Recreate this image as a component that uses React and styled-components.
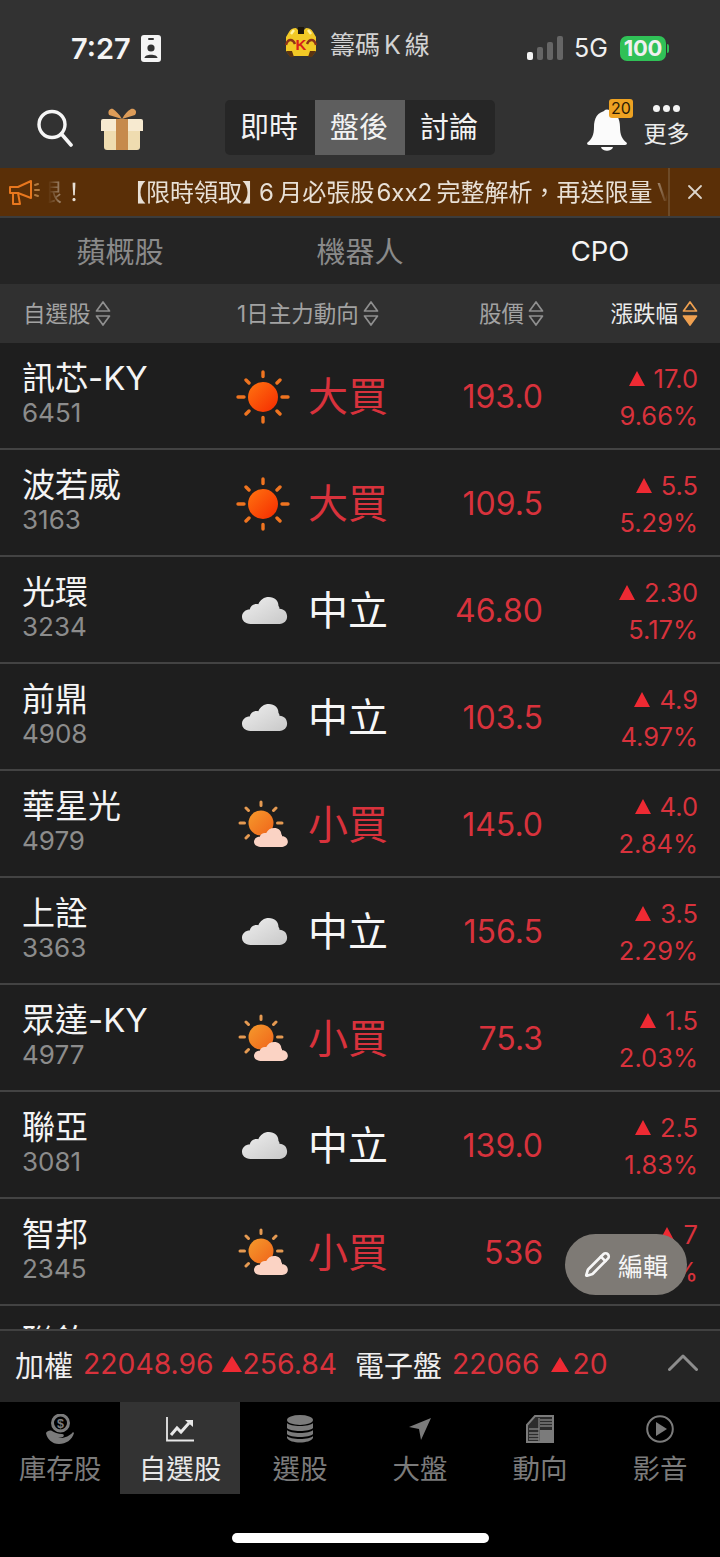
import React from "react";
import styled, { createGlobalStyle } from "styled-components";
import { Pencil, X } from "lucide-react";

const FONT = `Inter, "Noto Sans CJK TC", sans-serif`;
const RED = "#d8323c";
const TRI = "#ee2a33";

const GlobalStyle = createGlobalStyle`
  html, body { margin: 0; padding: 0; background: #000; }
  * { box-sizing: border-box; }
`;

const Page = styled.div`
  width: 720px;
  height: 1557px;
  display: flex;
  flex-direction: column;
  overflow: hidden;
  background: #000;
  font-family: ${FONT};
  color: #fff;
`;

const TopArea = styled.div`
  background: #323232;
`;

const StatusBar = styled.div`
  height: 88px;
  display: flex;
  align-items: center;
  padding: 8px 0 0 71px;
`;

const TimeBox = styled.div`
  width: 214px;
  display: flex;
  align-items: center;
  gap: 10px;
  font-size: 29px;
  font-weight: 600;
  color: #f4f4f4;
`;

const AppTitle = styled.div`
  width: 242px;
  display: flex;
  align-items: center;
  gap: 13px;
  font-size: 25px;
  color: #d2d2d2;
  margin-top: -10px;
`;

const TitleLetter = styled.span`
  margin: 0 4px;
`;

const StatusRight = styled.div`
  display: flex;
  align-items: center;
  font-size: 25px;
  color: #f0f0f0;
`;

const Network = styled.span`
  margin: 0 12px 0 11px;
`;

const Battery = styled.div`
  width: 46px;
  height: 25px;
  border-radius: 7px;
  background: #30c157;
  display: flex;
  align-items: center;
  justify-content: center;
  font-size: 22px;
  font-weight: 700;
  letter-spacing: -0.3px;
`;

const BatteryCap = styled.div`
  width: 2px;
  height: 9px;
  margin-left: 1px;
  border-radius: 0 2px 2px 0;
  background: #30c157;
`;

const Toolbar = styled.div`
  height: 80px;
  display: flex;
  align-items: flex-start;
  padding: 12px 30px 0 37px;
`;

const ToolLeft = styled.div`
  width: 188px;
  height: 55px;
  display: flex;
  align-items: center;
  gap: 28px;
`;

const Segments = styled.div`
  width: 270px;
  height: 55px;
  display: flex;
  border-radius: 5px;
  overflow: hidden;
  background: #262626;
`;

const Segment = styled.div`
  width: 90px;
  display: flex;
  align-items: center;
  justify-content: center;
  padding: 0 2px 5px 0;
  font-size: 29px;
  color: #f2f2f2;
  background: ${(p) => (p.$active ? "#5e5e5e" : "transparent")};
`;

const ToolRight = styled.div`
  flex: 1;
  height: 55px;
  display: flex;
  justify-content: flex-end;
  align-items: center;
  gap: 16px;
`;

const BellBox = styled.div`
  position: relative;
  width: 40px;
  height: 42px;
  margin-top: 4px;
`;

const BellBadge = styled.div`
  position: absolute;
  top: -10px;
  left: 22px;
  width: 24px;
  height: 19px;
  border-radius: 3px;
  background: #eea222;
  color: #2c1c05;
  font-size: 16px;
  line-height: 19px;
  text-align: center;
`;

const MoreBox = styled.div`
  width: 47px;
  margin-top: -5px;
  display: flex;
  flex-direction: column;
  align-items: center;
  font-size: 23px;
  line-height: 28px;
  color: #ececec;
`;

const Dots = styled.div`
  display: flex;
  gap: 3px;
  height: 12px;
  margin-bottom: 5px;
  align-items: center;
`;

const Dot = styled.i`
  width: 7px;
  height: 7px;
  border-radius: 50%;
  background: #f4f4f4;
`;

const Banner = styled.div`
  height: 48px;
  display: flex;
  align-items: center;
  background: #5a2f07;
`;

const BannerIcon = styled.div`
  width: 48px;
  padding-left: 9px;
  display: flex;
  align-items: center;
`;

const Ticker = styled.div`
  width: 620px;
  height: 48px;
  padding-bottom: 3px;
  display: flex;
  align-items: center;
  overflow: hidden;
  white-space: nowrap;
  font-size: 24px;
  color: #e8e0d6;
  -webkit-mask-image: linear-gradient(90deg, transparent 0, #000 26px, #000 600px, transparent 620px);
  mask-image: linear-gradient(90deg, transparent 0, #000 26px, #000 600px, transparent 620px);
`;

const TickerTail = styled.span`
  margin-left: -10px;
  width: 84px;
  flex: none;
`;

const TickerHead = styled.span`
  margin-right: -7px;
  flex: none;
`;

const BannerClose = styled.div`
  flex: 1;
  height: 48px;
  display: flex;
  align-items: center;
  justify-content: center;
  border-left: 2px solid #6d4a27;
  color: #ddd6cc;
`;

const Rule = styled.div`
  height: 2px;
  background: #3c3c3c;
`;

const Tabs = styled.div`
  height: 66px;
  display: grid;
  grid-template-columns: 240px 240px 240px;
  align-items: center;
  background: #242424;
`;

const Tab = styled.div`
  text-align: center;
  padding-bottom: ${(p) => (p.$active ? "0" : "3px")};
  font-size: ${(p) => (p.$active ? "27.5px" : "29px")};
  color: ${(p) => (p.$active ? "#f5f5f5" : "#8a8a8a")};
`;

const columns = `
  display: grid;
  grid-template-columns: 214px 150px 155px 1fr;
  padding: 0 24px 0 23px;
`;

const TableHead = styled.div`
  ${columns}
  height: 59px;
  align-items: center;
  background: #303030;
  font-size: 22.5px;
`;

const HeadCell = styled.div`
  display: flex;
  align-items: center;
  justify-content: ${(p) => (p.$right ? "flex-end" : "flex-start")};
  gap: 4px;
  color: ${(p) => (p.$active ? "#ececec" : "#a2a2a2")};
  margin-right: ${(p) => (p.$right ? "-2px" : "0")};
  white-space: nowrap;
`;

const HeadLabel = styled.span`
  margin: 0 0 3px 0;
`;

const ListWrap = styled.div`
  position: relative;
  flex: 1;
  min-height: 0;
  overflow: hidden;
  background: #1e1e1e;
`;

const Row = styled.div`
  ${columns}
  height: 107px;
  padding-top: 2px;
  align-items: center;
  border-bottom: 2px solid #434343;
`;

const NameCell = styled.div`
  display: flex;
  flex-direction: column;
  margin: -2px 0 0 -1px;
`;

const StockName = styled.div`
  font-size: 33px;
  line-height: 35px;
  color: #f4f4f4;
  white-space: nowrap;
`;

const StockCode = styled.div`
  font-size: 26px;
  line-height: 34px;
  color: #8c8c8c;
`;

const ActionCell = styled.div`
  display: flex;
  align-items: center;
  justify-content: space-between;
  margin: 0 -1px 0 -2px;
`;

const ActionText = styled.div`
  font-size: 40px;
  line-height: 44px;
  color: ${(p) => (p.$neutral ? "#f6f6f6" : RED)};
`;

const Price = styled.div`
  text-align: right;
  font-size: 32px;
  margin-right: -1px;
  color: ${RED};
`;

const ChangeCell = styled.div`
  display: flex;
  flex-direction: column;
  align-items: flex-end;
  margin-right: -2px;
  font-size: 25.5px;
  line-height: 37px;
  color: ${RED};
`;

const ChangeTop = styled.div`
  display: flex;
  align-items: center;
  gap: 9px;
`;

const UpMark = styled.i`
  width: 0;
  height: 0;
  margin-right: ${(p) => p.$gap || 0}px;
  border-left: ${(p) => p.$w || 8.5}px solid transparent;
  border-right: ${(p) => p.$w || 8.5}px solid transparent;
  border-bottom: ${(p) => (p.$w ? p.$w * 1.6 : 15)}px solid ${TRI};
`;

const EditButton = styled.div`
  position: absolute;
  left: 565px;
  top: 891px;
  width: 122px;
  height: 61px;
  border-radius: 31px;
  background: #7e7a75;
  display: flex;
  align-items: center;
  justify-content: center;
  gap: 7px;
  font-size: 25px;
  color: #f6f6f6;
`;

const IndexBar = styled.div`
  height: 73px;
  display: flex;
  align-items: center;
  padding: 0 22px 5px 15px;
  background: #252525;
  border-top: 2px solid #414141;
  white-space: nowrap;
`;

const IndexName = styled.span`
  font-size: 29px;
  color: #efefef;
  margin-right: 10px;
`;

const IndexValue = styled.span`
  font-size: 28.3px;
  color: ${RED};
  margin-right: ${(p) => p.$gap || 0}px;
`;

const IndexToggle = styled.div`
  margin-left: auto;
  margin-bottom: 3px;
  display: flex;
`;

const BottomNav = styled.div`
  height: 92px;
  display: grid;
  grid-template-columns: repeat(6, 120px);
  background: #000;
`;

const NavItem = styled.div`
  display: flex;
  flex-direction: column;
  align-items: center;
  padding-top: 11px;
  font-size: 27.5px;
  line-height: 38px;
  background: ${(p) => (p.$active ? "#333" : "transparent")};
  color: ${(p) => (p.$active ? "#e8e8e8" : "#7b7b7b")};
`;

const NavIcon = styled.div`
  height: 31px;
  margin-bottom: 6px;
  display: flex;
  align-items: center;
`;

const HomeArea = styled.div`
  height: 63px;
  display: flex;
  justify-content: center;
  padding-top: 39px;
  background: #000;
`;

const HomeBar = styled.div`
  width: 257px;
  height: 10px;
  border-radius: 5px;
  background: #fff;
`;

const SortIcon = ({ active }) => {
  const c = active ? "#efa050" : "#8f8f8f";
  return (
    <svg width="16" height="27" viewBox="0 0 16 27">
      <path d="M8 2 L14.5 11 H1.5 Z" fill="none" stroke={c} strokeWidth="1.7" strokeLinejoin="round" />
      <path d="M1.5 16 H14.5 L8 25 Z" fill={active ? c : "none"} stroke={c} strokeWidth="1.7" strokeLinejoin="round" />
    </svg>
  );
};

const SunIcon = () => (
  <svg width="56" height="56" viewBox="0 0 56 56">
    <defs>
      <linearGradient id="sunHot" x1="0" y1="0" x2="1" y2="1">
        <stop offset="0" stopColor="#ff7410" />
        <stop offset="1" stopColor="#f52a00" />
      </linearGradient>
    </defs>
    <circle cx="28" cy="28" r="15" fill="url(#sunHot)" />
    <g stroke="#ef7420" strokeWidth="3.4" strokeLinecap="round">
      <path d="M28 3 V7.5 M28 48.5 V53 M3 28 H9 M47 28 H53 M11 11 L14 14 M42 42 L45 45 M45 11 L42 14 M14 42 L11 45" />
    </g>
  </svg>
);

const cloudPath = "M9 30 C3 30 0 26 0 22 C0 17 4 14 8 14 C9 9 13 7 17 8 C19 3 23 0 28 0 C34 0 38 4 38 10 C39 11 39 12 39 13 C44 13 47 17 47 22 C47 26 44 30 39 30 Z";

const CloudIcon = () => (
  <svg width="56" height="56" viewBox="0 0 56 56">
    <defs>
      <linearGradient id="cloudGrey" x1="0" y1="0" x2="1" y2="1">
        <stop offset="0" stopColor="#efefef" />
        <stop offset="1" stopColor="#c8c8c8" />
      </linearGradient>
    </defs>
    <path d={cloudPath} transform="translate(7 14) scale(0.96 0.9)" fill="url(#cloudGrey)" />
  </svg>
);

const PartlyIcon = () => (
  <svg width="56" height="56" viewBox="0 0 56 56">
    <defs>
      <linearGradient id="sunSoft" x1="0" y1="0" x2="1" y2="1">
        <stop offset="0" stopColor="#f59a2c" />
        <stop offset="1" stopColor="#f0641a" />
      </linearGradient>
    </defs>
    <circle cx="26" cy="26" r="12.5" fill="url(#sunSoft)" />
    <g stroke="#e59a52" strokeWidth="3" strokeLinecap="round">
      <path d="M26 5 V8.5 M5 26 H9.5 M42.5 26 H47 M11 11 L13.5 13.5 M41 11 L38.5 13.5 M11 41 L13.5 38.5" />
    </g>
    <path d={cloudPath} transform="translate(19 31) scale(0.72 0.63)" fill="#fbd3c4" />
  </svg>
);

const LogoIcon = () => (
  <svg width="32" height="32" viewBox="0 0 32 32">
    <path d="M4 5 Q6 1 11 1 L13 3 H19 L21 1 Q26 1 28 5 L31 10 V24 L27 29 H5 L1 24 V10 Z" fill="#f2c926" />
    <rect x="13" y="0" width="6" height="7" fill="#1d170c" />
    <path d="M6 7 L9 3 M26 7 L23 3" stroke="#fff2a0" strokeWidth="2.5" />
    <path d="M1 18 C3 11 8 12 10 17 M31 18 C29 11 24 12 22 17" fill="none" stroke="#8c3318" strokeWidth="2.4" />
    <path d="M1 24 H7 L9 30 H5 Z M31 24 H25 L23 30 H27 Z" fill="#5c3410" />
    <text x="16" y="23" textAnchor="middle" fontSize="15" fontWeight="700" fill="#d8201c" fontFamily="Liberation Sans">K</text>
  </svg>
);

const IdCard = () => (
  <svg width="20" height="27" viewBox="0 0 20 27">
    <rect x="0" y="0" width="20" height="27" rx="3" fill="#f4f4f4" />
    <rect x="7" y="3" width="6" height="2" rx="1" fill="#323232" />
    <circle cx="10" cy="13" r="3.6" fill="#323232" />
    <path d="M3.5 23 C3.5 18.5 16.5 18.5 16.5 23 Z" fill="#323232" />
  </svg>
);

const Signal = () => (
  <svg width="36" height="24" viewBox="0 0 36 24">
    <rect x="0" y="16" width="6" height="8" rx="2" fill="#f4f4f4" />
    <rect x="10" y="11" width="6" height="13" rx="2" fill="#666" />
    <rect x="20" y="6" width="6" height="18" rx="2" fill="#666" />
    <rect x="30" y="0" width="6" height="24" rx="2" fill="#666" />
  </svg>
);

const SearchIcon = () => (
  <svg width="36" height="38" viewBox="0 0 36 38">
    <circle cx="15" cy="15.5" r="13" fill="none" stroke="#f6f6f6" strokeWidth="3.4" />
    <path d="M24.5 25 L34 36" stroke="#f6f6f6" strokeWidth="3.6" strokeLinecap="round" />
  </svg>
);

const GiftIcon = () => (
  <svg width="42" height="44" viewBox="0 0 42 44">
    <path d="M21 13 L8 9 C6 4 10 2 12 3 C15 5 18 8 21 13 Z M21 13 L34 9 C37 5 33 2 30 3 C26 5 24 8 21 13 Z" fill="#dd9c58" />
    <path d="M0 15 Q0 13 2 13 H40 Q42 13 42 15 V25 H0 Z" fill="#f7ead0" />
    <path d="M3 25 H39 V41 Q39 44 36 44 H6 Q3 44 3 41 Z" fill="#efdcb0" />
    <rect x="15" y="13" width="12" height="31" fill="#c68a4c" />
  </svg>
);

const BellIcon = () => (
  <svg width="40" height="42" viewBox="0 0 40 42">
    <circle cx="20" cy="4" r="3.5" fill="#fbfbfb" />
    <path d="M20 2 C10 2 7 10 7 18 C7 26 5 30 0 34 Q0 36 2 36 H38 Q40 36 40 34 C35 30 33 26 33 18 C33 10 30 2 20 2 Z" fill="#fbfbfb" />
    <path d="M14 38 H26 C25 43 15 43 14 38 Z" fill="#fbfbfb" />
  </svg>
);

const MegaphoneIcon = () => (
  <svg width="31" height="27" viewBox="0 0 31 27" fill="none" stroke="#e8771e" strokeWidth="2" strokeLinejoin="round" strokeLinecap="round">
    <path d="M1 8 H9 L22 2 V19 L9 14 H1 Z" />
    <path d="M4 14 V25 H11 L9 14" />
    <path d="M26 6 L29 5 M26 11 H30 M26 16 L29 17" stroke="#b07a40" />
  </svg>
);

const ChevronIcon = () => (
  <svg width="30" height="17" viewBox="0 0 30 17">
    <path d="M1.5 15.5 L15 2 L28.5 15.5" fill="none" stroke="#8d8d8d" strokeWidth="3" strokeLinecap="round" strokeLinejoin="round" />
  </svg>
);

const NavMoney = () => (
  <svg width="28" height="30" viewBox="0 0 28 30">
    <circle cx="14.5" cy="9" r="8" fill="none" stroke="#7b7b7b" strokeWidth="3" />
    <text x="14.5" y="13.5" textAnchor="middle" fontSize="12.5" fontWeight="700" fill="#7b7b7b" fontFamily="Liberation Sans">$</text>
    <path d="M0 19 C1 17 4 16 6 17 C8 18.5 12 20 16 20 C19 20 18 23.5 15 23.5 H12 C16 25 23 23 27 18 L28 19 C26 26 20 30 13 30 C6 30 1 25 0 19 Z" fill="#7b7b7b" />
  </svg>
);

const NavChart = () => (
  <svg width="28" height="26" viewBox="0 0 28 26" fill="none" stroke="#e8e8e8">
    <path d="M1 1 V24.5 H28" strokeWidth="1.8" />
    <path d="M5 19 L11 12 L15 16 L23 7" strokeWidth="3" />
    <path d="M19 4 H27 V11 Z" fill="#e8e8e8" stroke="none" />
  </svg>
);

const NavCoins = () => (
  <svg width="26" height="28" viewBox="0 0 26 28" fill="#7b7b7b">
    <ellipse cx="13" cy="5" rx="13" ry="5" />
    <path d="M0 8 C3 12 23 12 26 8 V13 C23 17 3 17 0 13 Z" />
    <path d="M0 15 C3 19 23 19 26 15 V19 C23 23 3 23 0 19 Z" />
    <path d="M0 21 C3 25 23 25 26 21 V23 C23 29 3 29 0 23 Z" />
  </svg>
);

const NavArrow = () => (
  <svg width="24" height="24" viewBox="0 0 24 24" fill="#7b7b7b">
    <path d="M23 1 L13 23 L11 12 L1 10 Z" />
  </svg>
);

const NavPaper = () => (
  <svg width="28" height="28" viewBox="0 0 28 28">
    <path d="M9 1 H27 V27 H1 V10 Z" fill="#2c2c2c" stroke="#7b7b7b" strokeWidth="2" />
    <rect x="14" y="15" width="12" height="11" fill="#7b7b7b" />
    <g stroke="#7b7b7b" strokeWidth="1.4">
      <path d="M13 3 V26 M14 5 H26 M14 8 H26 M14 11 H26 M3 14 H13 M3 18 H13 M3 21 H13 M3 24 H13" />
    </g>
  </svg>
);

const NavPlay = () => (
  <svg width="28" height="28" viewBox="0 0 28 28">
    <circle cx="14" cy="14" r="12.8" fill="none" stroke="#7b7b7b" strokeWidth="2" />
    <path d="M10 7 L21 14 L10 21 Z" fill="#7b7b7b" />
  </svg>
);

const ACTIONS = {
  buy: { label: "大買", Icon: SunIcon },
  small: { label: "小買", Icon: PartlyIcon },
  flat: { label: "中立", Icon: CloudIcon, neutral: true },
};

const STOCKS = [
  ["訊芯-KY", "6451", "buy", "193.0", "17.0", "9.66%"],
  ["波若威", "3163", "buy", "109.5", "5.5", "5.29%"],
  ["光環", "3234", "flat", "46.80", "2.30", "5.17%"],
  ["前鼎", "4908", "flat", "103.5", "4.9", "4.97%"],
  ["華星光", "4979", "small", "145.0", "4.0", "2.84%"],
  ["上詮", "3363", "flat", "156.5", "3.5", "2.29%"],
  ["眾達-KY", "4977", "small", "75.3", "1.5", "2.03%"],
  ["聯亞", "3081", "flat", "139.0", "2.5", "1.83%"],
  ["智邦", "2345", "small", "536", "7", "1.32%"],
  ["聯鈞", "3450", "flat", "120.0", "1.0", "0.84%"],
];

const NAV = [
  ["庫存股", NavMoney],
  ["自選股", NavChart, true],
  ["選股", NavCoins],
  ["大盤", NavArrow],
  ["動向", NavPaper],
  ["影音", NavPlay],
];

export default function App() {
  return (
    <Page>
      <GlobalStyle />
      <TopArea>
        <StatusBar>
          <TimeBox>
            7:27
            <IdCard />
          </TimeBox>
          <AppTitle>
            <LogoIcon />
            <span>
              籌碼<TitleLetter>K</TitleLetter>線
            </span>
          </AppTitle>
          <StatusRight>
            <Signal />
            <Network>5G</Network>
            <Battery>100</Battery>
            <BatteryCap />
          </StatusRight>
        </StatusBar>
        <Toolbar>
          <ToolLeft>
            <SearchIcon />
            <GiftIcon />
          </ToolLeft>
          <Segments>
            <Segment>即時</Segment>
            <Segment $active>盤後</Segment>
            <Segment>討論</Segment>
          </Segments>
          <ToolRight>
            <BellBox>
              <BellIcon />
              <BellBadge>20</BellBadge>
            </BellBox>
            <MoreBox>
              <Dots>
                <Dot />
                <Dot />
                <Dot />
              </Dots>
              更多
            </MoreBox>
          </ToolRight>
        </Toolbar>
      </TopArea>

      <Banner>
        <BannerIcon>
          <MegaphoneIcon />
        </BannerIcon>
        <Ticker>
          <TickerTail>限！</TickerTail>
          <TickerHead>【限時領取】</TickerHead>
          <span>6{"\u2009"}月必張股{"\u200a"}6xx2{"\u2009"}完整解析，再送限量{"\u2009"}VIP</span>
        </Ticker>
        <BannerClose>
          <X size={24} strokeWidth={1.8} />
        </BannerClose>
      </Banner>
      <Rule />

      <Tabs>
        <Tab>蘋概股</Tab>
        <Tab>機器人</Tab>
        <Tab $active>CPO</Tab>
      </Tabs>

      <TableHead>
        <HeadCell>
          <HeadLabel>自選股</HeadLabel>
          <SortIcon />
        </HeadCell>
        <HeadCell>
          <HeadLabel>1日主力動向</HeadLabel>
          <SortIcon />
        </HeadCell>
        <HeadCell $right>
          <HeadLabel>股價</HeadLabel>
          <SortIcon />
        </HeadCell>
        <HeadCell $right $active>
          <HeadLabel>漲跌幅</HeadLabel>
          <SortIcon active />
        </HeadCell>
      </TableHead>

      <ListWrap>
        {STOCKS.map(([name, code, action, price, change, pct]) => {
          const { label, Icon, neutral } = ACTIONS[action];
          return (
            <Row key={code}>
              <NameCell>
                <StockName>{name}</StockName>
                <StockCode>{code}</StockCode>
              </NameCell>
              <ActionCell>
                <Icon />
                <ActionText $neutral={neutral}>{label}</ActionText>
              </ActionCell>
              <Price>{price}</Price>
              <ChangeCell>
                <ChangeTop>
                  <UpMark />
                  {change}
                </ChangeTop>
                {pct}
              </ChangeCell>
            </Row>
          );
        })}
        <EditButton>
          <Pencil size={27} strokeWidth={2.4} />
          編輯
        </EditButton>
      </ListWrap>

      <IndexBar>
        <IndexName>加權</IndexName>
        <IndexValue $gap={8}>22048.96</IndexValue>
        <UpMark $w={10.5} $gap={1} />
        <IndexValue $gap={18}>256.84</IndexValue>
        <IndexName>電子盤</IndexName>
        <IndexValue $gap={12}>22066</IndexValue>
        <UpMark $w={9.5} $gap={3} />
        <IndexValue>20</IndexValue>
        <IndexToggle>
          <ChevronIcon />
        </IndexToggle>
      </IndexBar>

      <BottomNav>
        {NAV.map(([label, Icon, active]) => (
          <NavItem key={label} $active={active}>
            <NavIcon>
              <Icon />
            </NavIcon>
            {label}
          </NavItem>
        ))}
      </BottomNav>
      <HomeArea>
        <HomeBar />
      </HomeArea>
    </Page>
  );
}
